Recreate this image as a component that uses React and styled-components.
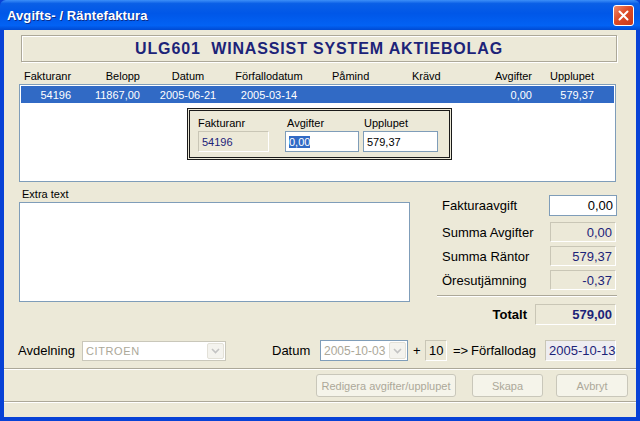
import React from 'react'
import styled, { createGlobalStyle, css } from 'styled-components'

const GlobalStyle = createGlobalStyle`
  html, body {
    margin: 0;
    padding: 0;
    background: #0842d6;
  }
  body {
    font-family: "Liberation Sans", Arial, sans-serif;
  }
`

const navy = '#1c2378'
const fieldBorder = '#7f9db9'

const Window = styled.div`
  width: 640px;
  height: 421px;
  display: flex;
  flex-direction: column;
  overflow: hidden;
  background: #0842d6;
`
const TitleBar = styled.div`
  height: 30px;
  flex: none;
  display: flex;
  align-items: center;
  justify-content: space-between;
  padding: 0 6px 0 7px;
  box-sizing: border-box;
  border-radius: 6px 6px 0 0;
  background: linear-gradient(
    to bottom,
    #3d8ff8 0%,
    #0a5fe6 12%,
    #0057e8 45%,
    #0262f4 85%,
    #004ad2 100%
  );
`
const Title = styled.span`
  color: #fff;
  font-size: 13px;
  font-weight: bold;
  letter-spacing: 0.1px;
  text-shadow: 1px 1px 0 #0b2c8a;
`
const CloseButton = styled.div`
  width: 21px;
  height: 21px;
  box-sizing: border-box;
  border: 1px solid #fff;
  border-radius: 3px;
  display: flex;
  align-items: center;
  justify-content: center;
  background: linear-gradient(135deg, #f08b6c 0%, #de4b27 45%, #c9381a 100%);
`
const Frame = styled.div`
  flex: 1;
  display: flex;
  flex-direction: column;
  border: 4px solid #0842d6;
  border-top: none;
  background: #ece9d8;
  font-size: 11px;
  color: #000;
`
const HeaderBox = styled.div`
  margin: 5px 19px 0 17px;
  height: 27px;
  box-sizing: border-box;
  border: 1px solid #aca899;
  box-shadow: inset 1px 1px 0 #fff, 1px 1px 0 #fff;
  display: flex;
  align-items: center;
  justify-content: center;
  font-size: 16px;
  font-weight: bold;
  color: ${navy};
  letter-spacing: 0.85px;
  white-space: pre;
`
const Content = styled.div`
  padding: 0 20px 0 15px;
`
const columns = [
  { w: 52, head: 'left', headPad: 3, cell: 'right' },
  { w: 69, head: 'right', headPad: 2, cell: 'right' },
  { w: 92, head: 'center', headPad: 0, cell: 'center' },
  { w: 70, head: 'center', headPad: 0, cell: 'center' },
  { w: 96, head: 'left', headPad: 28, cell: 'left' },
  { w: 80, head: 'left', headPad: 12, cell: 'left' },
  { w: 54, head: 'right', headPad: 2, cell: 'right' },
  { w: 62, head: 'right', headPad: 2, cell: 'right' },
]
const gridCols = columns.map(c => `${c.w}px`).join(' ')

const HeadRow = styled.div`
  display: grid;
  grid-template-columns: ${gridCols};
  height: 17px;
  margin-top: 5px;
  padding-left: 2px;
  align-items: center;
`
const Cell = styled.div`
  text-align: ${p => p.$align};
  ${p =>
    p.$align === 'left' &&
    css`
      padding-left: ${p.$pad}px;
    `}
  ${p =>
    p.$align === 'right' &&
    css`
      padding-right: ${p.$pad}px;
    `}
  white-space: nowrap;
`
const List = styled.div`
  position: relative;
  height: 98px;
  box-sizing: border-box;
  border: 1px solid ${fieldBorder};
  background: #fff;
  padding: 1px;
`
const Row = styled.div`
  display: grid;
  grid-template-columns: ${gridCols};
  height: 17px;
  align-items: center;
  background: ${p => (p.$selected ? '#316ac5' : 'transparent')};
  color: ${p => (p.$selected ? '#fff' : '#000')};
`
const EditPanel = styled.div`
  position: absolute;
  left: 167px;
  top: 23px;
  width: 265px;
  height: 52px;
  box-sizing: border-box;
  border: 3px double #1a1a1a;
  background: #ece9d8;
  display: grid;
  grid-template-columns: 71px 74px 75px;
  padding: 4px 0 0 8px;
  align-content: start;
`
const PanelLabel = styled.div`
  height: 16px;
  line-height: 16px;
  margin-left: ${p => p.$ml || 0}px;
`
const Field = styled.div`
  box-sizing: border-box;
  flex: none;
  height: ${p => p.$h || 20}px;
  width: ${p => p.$w}px;
  margin-left: ${p => p.$ml || 0}px;
  margin-right: ${p => p.$mr || 0}px;
  display: flex;
  align-items: center;
  justify-content: ${p => (p.$right ? 'flex-end' : 'flex-start')};
  padding: 0 3px;
  font-size: ${p => p.$fs || 11}px;
  font-weight: ${p => (p.$bold ? 'bold' : 'normal')};
  white-space: nowrap;
  ${p =>
    p.$readonly
      ? css`
          background: ${p.$bg || '#ece9d8'};
          color: ${p.$plain ? '#000' : navy};
          border: 1px solid;
          border-color: #c9c6b6 #fff #fff #c9c6b6;
        `
      : css`
          background: #fff;
          color: #000;
          border: 1px solid ${fieldBorder};
        `}
`
const Selected = styled.span`
  background: #316ac5;
  color: #fff;
`
const Lower = styled.div`
  display: flex;
  justify-content: space-between;
  margin-top: 5px;
  height: 139px;
`
const NoteColumn = styled.div`
  width: 391px;
`
const NoteLabel = styled.div`
  height: 15px;
  line-height: 14px;
  padding-left: 3px;
`
const NoteArea = styled.div`
  height: 100px;
  box-sizing: border-box;
  border: 1px solid ${fieldBorder};
  background: #fff;
`
const Summary = styled.div`
  width: 180px;
  margin-right: -1px;
  display: flex;
  flex-direction: column;
  font-size: 13px;
`
const SumRow = styled.div`
  display: flex;
  align-items: center;
  justify-content: space-between;
  height: ${p => p.$h}px;
  margin-top: ${p => p.$mt}px;
  padding-left: 5px;
`
const TotalRow = styled(SumRow)`
  justify-content: flex-end;
  padding-left: 0;
  gap: 8px;
  font-weight: bold;
`
const Etched = styled.div`
  height: 0;
  border-top: 1px solid #aca899;
  border-bottom: 1px solid #fff;
  margin-top: ${p => p.$mt || 0}px;
`
const BottomRow = styled.div`
  display: flex;
  align-items: center;
  height: 21px;
  margin: 14px 0 0 -1px;
  font-size: 13px;
`
const Label = styled.span`
  flex: none;
  width: ${p => (p.$w ? `${p.$w}px` : 'auto')};
  margin-left: ${p => p.$ml || 0}px;
  white-space: nowrap;
`
const Combo = styled.div`
  box-sizing: border-box;
  flex: none;
  width: ${p => p.$w}px;
  height: ${p => p.$h}px;
  border: 1px solid ${p => p.$border};
  background: #fff;
  display: flex;
  align-items: center;
  justify-content: space-between;
  padding: 1px 1px 1px 3px;
  color: #aca899;
  font-size: ${p => p.$fs}px;
  white-space: nowrap;
`
const ComboButton = styled.div`
  width: 17px;
  height: 100%;
  box-sizing: border-box;
  border: 1px solid #e3e1d8;
  border-radius: 2px;
  background: #f4f3ee;
  display: flex;
  align-items: center;
  justify-content: center;
`
const ButtonBar = styled.div`
  display: flex;
  justify-content: flex-end;
  align-items: center;
  height: 23px;
  margin-top: 4px;
  padding-right: 8px;
`
const Button = styled.div`
  width: ${p => p.$w}px;
  height: 23px;
  margin-left: ${p => p.$ml}px;
  box-sizing: border-box;
  border: 1px solid #c9c7ba;
  border-radius: 3px;
  background: #f5f4ea;
  color: #aca899;
  font-size: 11px;
  display: flex;
  align-items: center;
  justify-content: center;
  white-space: nowrap;
`
const Status = styled.div`
  flex: 1;
  margin-top: 4px;
`

const Arrow = () => (
  <svg width="9" height="6" viewBox="0 0 9 6">
    <polyline points="1,1 4.5,4.5 8,1" fill="none" stroke="#c3c3c3" strokeWidth="1.6" />
  </svg>
)

const heads = ['Fakturanr', 'Belopp', 'Datum', 'Förfallodatum', 'Påmind', 'Krävd', 'Avgifter', 'Upplupet']
const invoice = ['54196', '11867,00', '2005-06-21', '2005-03-14', '', '', '0,00', '579,37']

export default function App() {
  return (
    <Window>
      <GlobalStyle />
      <TitleBar>
        <Title>Avgifts- / Räntefaktura</Title>
        <CloseButton>
          <svg width="11" height="11" viewBox="0 0 11 11">
            <path d="M1.5 1.5 L9.5 9.5 M9.5 1.5 L1.5 9.5" stroke="#fff" strokeWidth="2" strokeLinecap="round" />
          </svg>
        </CloseButton>
      </TitleBar>
      <Frame>
        <HeaderBox>ULG601  WINASSIST SYSTEM AKTIEBOLAG</HeaderBox>
        <Content>
          <HeadRow>
            {heads.map((h, i) => (
              <Cell key={h} $align={columns[i].head} $pad={columns[i].headPad}>
                {h}
              </Cell>
            ))}
          </HeadRow>
          <List>
            <Row $selected>
              {invoice.map((v, i) => (
                <Cell key={i} $align={columns[i].cell} $pad={2}>
                  {v}
                </Cell>
              ))}
            </Row>
            <EditPanel>
              <PanelLabel>Fakturanr</PanelLabel>
              <PanelLabel $ml={18}>Avgifter</PanelLabel>
              <PanelLabel $ml={21}>Upplupet</PanelLabel>
              <Field $readonly $w={71} $h={21}>54196</Field>
              <Field $w={74} $h={21} $ml={16}>
                <Selected>0,00</Selected>
              </Field>
              <Field $w={75} $h={21} $ml={20}>579,37</Field>
            </EditPanel>
          </List>
          <Lower>
            <NoteColumn>
              <NoteLabel>Extra text</NoteLabel>
              <NoteArea />
            </NoteColumn>
            <Summary>
              <SumRow $h={21} $mt={8}>
                <span>Fakturaavgift</span>
                <Field $w={68} $h={21} $fs={13} $right>0,00</Field>
              </SumRow>
              <SumRow $h={20} $mt={6}>
                <span>Summa Avgifter</span>
                <Field $readonly $w={66} $h={20} $fs={13} $mr={1} $right>0,00</Field>
              </SumRow>
              <SumRow $h={20} $mt={4}>
                <span>Summa Räntor</span>
                <Field $readonly $w={66} $h={20} $fs={13} $mr={1} $right>579,37</Field>
              </SumRow>
              <SumRow $h={20} $mt={4}>
                <span>Öresutjämning</span>
                <Field $readonly $w={66} $h={20} $fs={13} $mr={1} $right>-0,37</Field>
              </SumRow>
              <Etched $mt={5} />
              <TotalRow $h={21} $mt={7}>
                <span>Totalt</span>
                <Field $readonly $bold $w={81} $h={21} $fs={13} $mr={1} $right>579,00</Field>
              </TotalRow>
            </Summary>
          </Lower>
          <BottomRow>
            <Label $w={64}>Avdelning</Label>
            <Combo $w={144} $h={20} $border="#c9c7ba" $fs={11}>
              <span style={{ letterSpacing: 0.6 }}>CITROEN</span>
              <ComboButton><Arrow /></ComboButton>
            </Combo>
            <Label $w={48} $ml={46}>Datum</Label>
            <Combo $w={88} $h={21} $border={fieldBorder} $fs={12}>
              <span>2005-10-03</span>
              <ComboButton><Arrow /></ComboButton>
            </Combo>
            <Label $w={12} $ml={5}>+</Label>
            <Field $readonly $plain $w={22} $h={21} $fs={13}>10</Field>
            <Label $w={18} $ml={6}>=&gt;</Label>
            <Label $w={74}>Förfallodag</Label>
            <Field $readonly $bg="#eeedf0" $w={71} $h={21} $fs={13}>2005-10-13</Field>
          </BottomRow>
        </Content>
        <Etched $mt={7} />
        <ButtonBar>
          <Button $w={140} $ml={0}>Redigera avgifter/upplupet</Button>
          <Button $w={71} $ml={16}>Skapa</Button>
          <Button $w={72} $ml={13}>Avbryt</Button>
        </ButtonBar>
        <Etched $mt={4} />
        <Status />
      </Frame>
    </Window>
  )
}
